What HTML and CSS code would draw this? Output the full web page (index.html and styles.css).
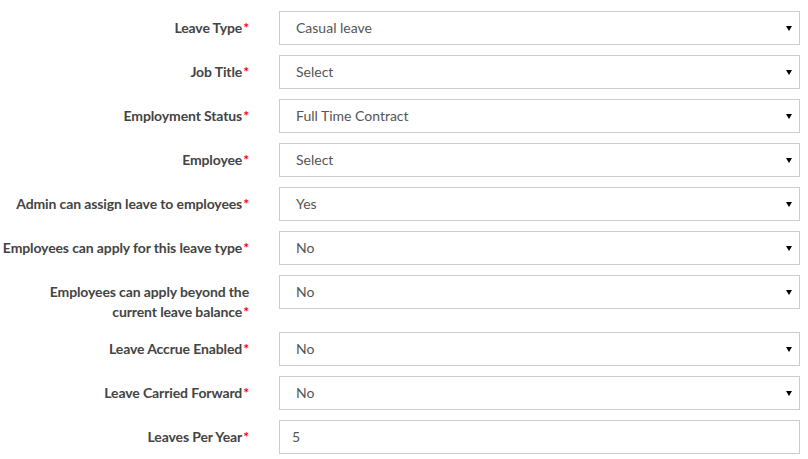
FILE: index.html
```html
<!DOCTYPE html>
<html>
<head>
<meta charset="utf-8">
<link rel="stylesheet" href="styles.css">
</head>
<body>
<form class="form">
  <div class="row"><label class="lbl">Leave Type<span class="req">*</span></label><div class="ctl select"><span class="val">Casual leave</span><svg class="arrow" width="6" height="5" viewBox="0 0 6 5"><path d="M0 0H6L3 5Z" fill="#000"/></svg></div></div>
  <div class="row"><label class="lbl">Job Title<span class="req">*</span></label><div class="ctl select"><span class="val">Select</span><svg class="arrow" width="6" height="5" viewBox="0 0 6 5"><path d="M0 0H6L3 5Z" fill="#000"/></svg></div></div>
  <div class="row"><label class="lbl">Employment Status<span class="req">*</span></label><div class="ctl select"><span class="val">Full Time Contract</span><svg class="arrow" width="6" height="5" viewBox="0 0 6 5"><path d="M0 0H6L3 5Z" fill="#000"/></svg></div></div>
  <div class="row"><label class="lbl">Employee<span class="req">*</span></label><div class="ctl select"><span class="val">Select</span><svg class="arrow" width="6" height="5" viewBox="0 0 6 5"><path d="M0 0H6L3 5Z" fill="#000"/></svg></div></div>
  <div class="row"><label class="lbl">Admin can assign leave to employees<span class="req">*</span></label><div class="ctl select"><span class="val">Yes</span><svg class="arrow" width="6" height="5" viewBox="0 0 6 5"><path d="M0 0H6L3 5Z" fill="#000"/></svg></div></div>
  <div class="row"><label class="lbl">Employees can apply for this leave type<span class="req">*</span></label><div class="ctl select"><span class="val">No</span><svg class="arrow" width="6" height="5" viewBox="0 0 6 5"><path d="M0 0H6L3 5Z" fill="#000"/></svg></div></div>
  <div class="row"><label class="lbl">Employees can apply beyond the<br>current leave balance<span class="req">*</span></label><div class="ctl select"><span class="val">No</span><svg class="arrow" width="6" height="5" viewBox="0 0 6 5"><path d="M0 0H6L3 5Z" fill="#000"/></svg></div></div>
  <div class="row"><label class="lbl">Leave Accrue Enabled<span class="req">*</span></label><div class="ctl select"><span class="val">No</span><svg class="arrow" width="6" height="5" viewBox="0 0 6 5"><path d="M0 0H6L3 5Z" fill="#000"/></svg></div></div>
  <div class="row"><label class="lbl">Leave Carried Forward<span class="req">*</span></label><div class="ctl select"><span class="val">No</span><svg class="arrow" width="6" height="5" viewBox="0 0 6 5"><path d="M0 0H6L3 5Z" fill="#000"/></svg></div></div>
  <div class="row"><label class="lbl">Leaves Per Year<span class="req">*</span></label><div class="ctl input"><span class="val">5</span></div></div>
</form>
</body>
</html>
```
FILE: styles.css
```css
html, body {
  margin: 0;
  padding: 0;
  background: #fff;
}
body {
  font-family: Lato, "Liberation Sans", sans-serif;
  font-size: 14px;
  color: #333;
}
.form {
  display: flex;
  flex-direction: column;
  gap: 10px;
  padding-top: 11px;
}
.row {
  display: flex;
  align-items: flex-start;
  gap: 30px;
}
.lbl {
  flex: 0 0 249px;
  text-align: right;
  font-weight: 700;
  color: #444;
  line-height: 20px;
  padding-top: 7px;
  letter-spacing: -0.12px;
}
.req {
  color: #f00;
  margin-left: 1px;
}
.ctl {
  flex: 0 0 521px;
  box-sizing: border-box;
  height: 34px;
  border: 1px solid #ccc;
  display: flex;
  align-items: center;
  color: #555;
  line-height: 20px;
}
.select {
  padding: 0 7px 0 16px;
}
.input {
  padding: 0 12px;
}
.val {
  flex: 1;
}
.arrow {
  display: block;
}
```
